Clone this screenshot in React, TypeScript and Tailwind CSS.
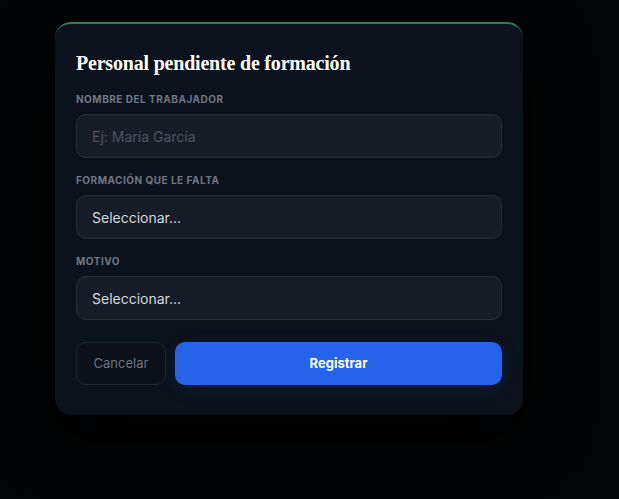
import React from 'react';

const sans = { fontFamily: 'Inter, "Noto Sans", sans-serif' };

function Field({ label, children }: { label: string; children: React.ReactNode }) {
  return (
    <div className="flex flex-col">
      <label className="mb-[9px] text-[10px] font-bold uppercase tracking-[0.05em] text-[#6f7783] leading-[12px]">
        {label}
      </label>
      {children}
    </div>
  );
}

export default function App() {
  return (
    <div className="min-h-[499px] w-full bg-[#030405] pt-[22px]" style={sans}>
      <div className="ml-[55px] w-[468px] rounded-[16px] border-t-2 border-[#2f7d5a] bg-[#0c121b] px-[21px] pb-[30px] pt-[26px] shadow-[0_20px_60px_rgba(0,0,0,0.7)]">
        <h2
          className="mb-[17px] text-[20px] font-bold leading-[26px] tracking-[-0.01em] text-white"
          style={{ fontFamily: '"Liberation Serif", "DejaVu Serif", serif' }}
        >
          Personal pendiente de formación
        </h2>

        <div className="flex flex-col gap-[16px]">
          <Field label="Nombre del trabajador">
            <input
              placeholder="Ej: María García"
              className="h-[44px] w-full rounded-[10px] border border-[#262d38] bg-[#171d27] px-[15px] text-[14px] text-[#d1d5db] placeholder:text-[#4b5360] outline-none"
            />
          </Field>
          <Field label="Formación que le falta">
            <div className="flex h-[44px] w-full items-center rounded-[10px] border border-[#262d38] bg-[#171d27] px-[15px] text-[14px] text-[#d4d7dc]">
              Seleccionar...
            </div>
          </Field>
          <Field label="Motivo">
            <div className="flex h-[44px] w-full items-center rounded-[10px] border border-[#262d38] bg-[#171d27] px-[15px] text-[14px] text-[#d4d7dc]">
              Seleccionar...
            </div>
          </Field>
        </div>

        <div className="mt-[22px] flex gap-[9px]">
          <button className="h-[43px] w-[90px] rounded-[10px] border border-[#1f2632] bg-[#0b1019] text-[13px] text-[#6b7280]">
            Cancelar
          </button>
          <button className="h-[43px] flex-1 rounded-[10px] bg-[#2563eb] text-[13px] font-bold text-white shadow-[0_4px_16px_rgba(37,99,235,0.15)]">
            Registrar
          </button>
        </div>
      </div>
    </div>
  );
}
